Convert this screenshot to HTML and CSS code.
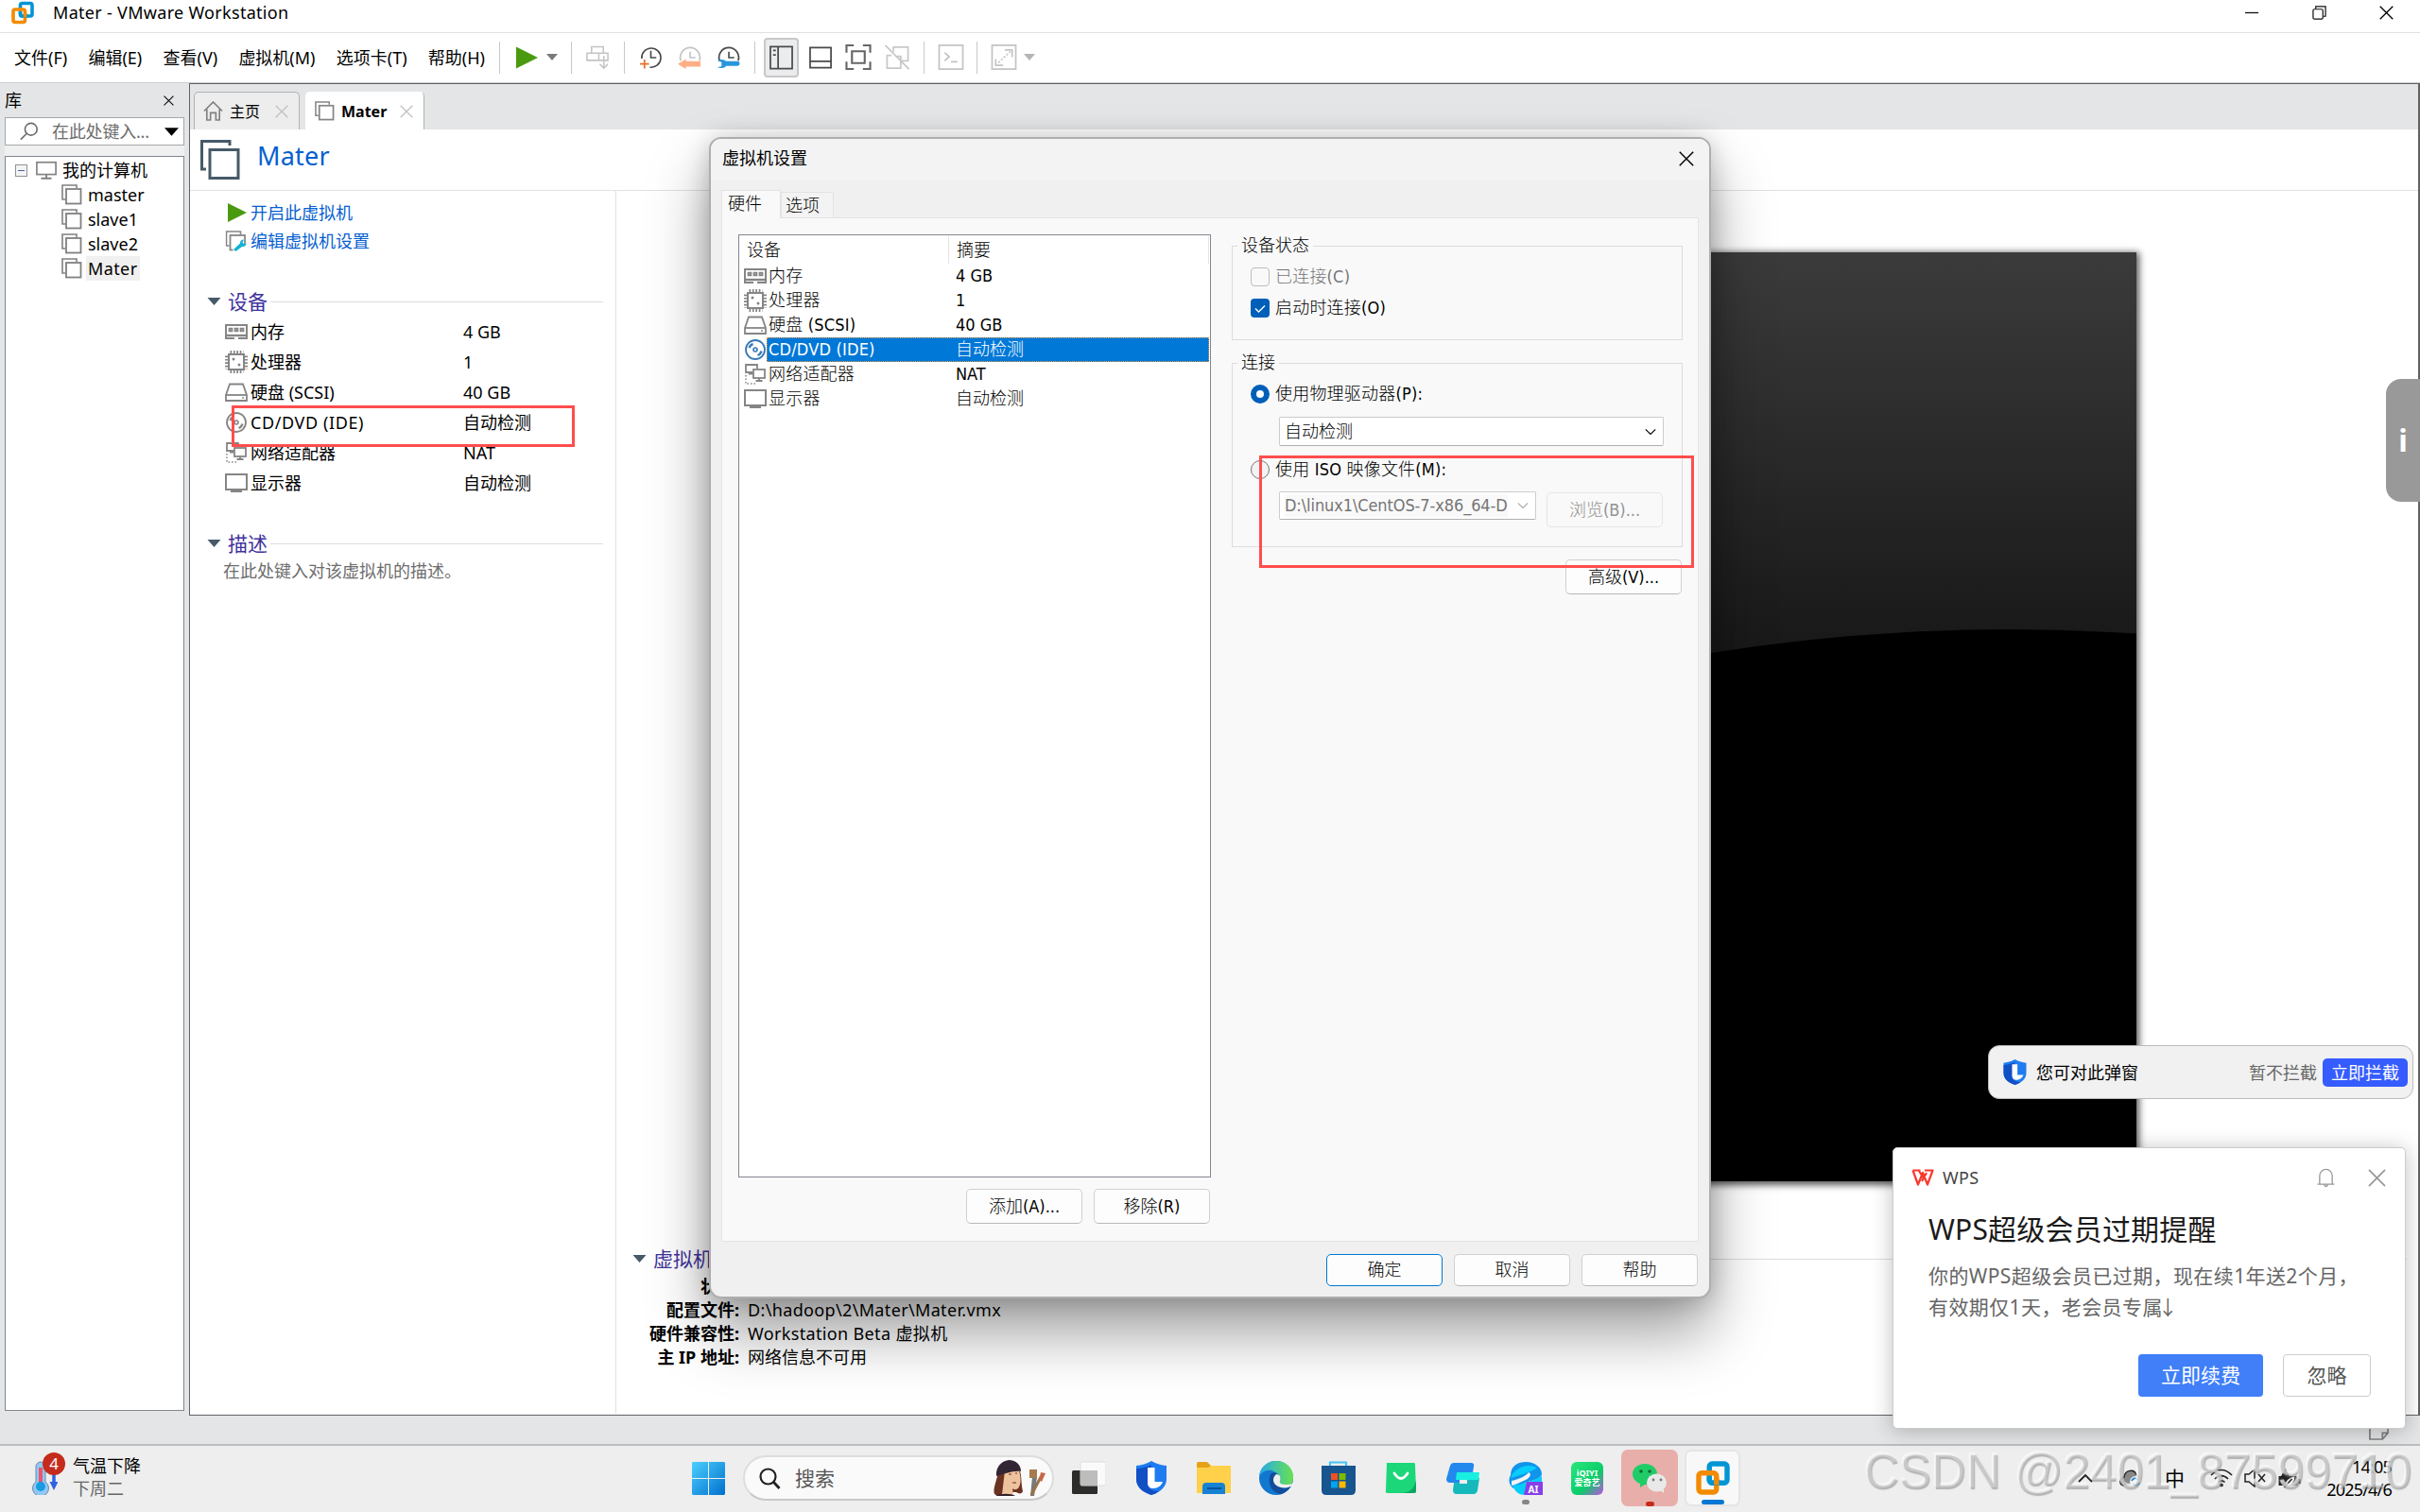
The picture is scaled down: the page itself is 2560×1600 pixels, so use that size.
FILE: index.html
```html
<!DOCTYPE html>
<html lang="zh-CN">

<head>
    <meta charset="UTF-8">
    <title>Mater - VMware Workstation</title>
    <link rel="stylesheet" href="styles.css">
</head>

<body>
    <!-- Shared icons -->
    <svg class="sprite" xmlns="http://www.w3.org/2000/svg">
        <symbol id="vmware" viewBox="0 0 24 24">
            <rect x="9.5" y="2" width="12.5" height="13.5" rx="2" fill="none" stroke="#0095d3" stroke-width="3.6" />
            <rect x="2" y="8.5" width="12.5" height="13.5" rx="2" fill="none" stroke="#f38b00" stroke-width="3.6" />
            <path d="M9.500 11v2.500a2 2 0 0 0 2 2h6" fill="none" stroke="#0095d3" stroke-width="3.6" />
            <path d="M14.500 12v5" fill="none" stroke="#f38b00" stroke-width="3.6" />
        </symbol>
        <symbol id="vm" viewBox="0 0 22 22">
            <path d="M4 16H1V1h15v3" fill="none" stroke="currentColor" stroke-width="1.6" />
            <rect x="5" y="5" width="15.500" height="15.500" fill="none" stroke="currentColor" stroke-width="1.8" />
        </symbol>
        <symbol id="cross" viewBox="0 0 14 14">
            <path d="M.7.7l12.600 12.600M13.300.7L.7 13.300" fill="none" stroke="currentColor" stroke-width="1.3" />
        </symbol>
        <symbol id="play" viewBox="0 0 20 20">
            <path d="M0 0l20 10L0 20z" fill="#4a9a10" />
        </symbol>
        <symbol id="caret" viewBox="0 0 14 8">
            <path d="M0 0h14L7 8z" fill="currentColor" />
        </symbol>
        <symbol id="lens" viewBox="0 0 22 22">
            <circle cx="13" cy="8.500" r="7" fill="none" stroke="currentColor" stroke-width="1.800" />
            <path d="M8 13.500l-7 7" stroke="currentColor" stroke-width="1.800" />
        </symbol>
        <symbol id="monitor" viewBox="0 0 24 24">
            <rect x="1" y="3" width="22" height="16" fill="#fff" stroke="currentColor" stroke-width="2" />
            <path d="M6 21h12" stroke="currentColor" stroke-width="2" />
        </symbol>
        <symbol id="computer" viewBox="0 0 24 24">
            <rect x="1" y="3" width="22" height="14" fill="#fff" stroke="currentColor" stroke-width="1.800" />
            <path d="M12 17v4M6 21.500h12" stroke="currentColor" stroke-width="2" />
        </symbol>
        <symbol id="memory" viewBox="0 0 24 24">
            <rect x="1" y="5" width="22" height="14" fill="#fff" stroke="currentColor" stroke-width="2" />
            <path d="M0 16h24" stroke="currentColor" stroke-width="2.400" />
            <path d="M4.500 8.500h3v3h-3zM10.500 8.500h3v3h-3zM16.500 8.500h3v3h-3z" fill="#aaa" stroke="currentColor" stroke-width="1.700" />
            <path d="M10 18h4v2.100h-4z" fill="#fff" />
        </symbol>
        <symbol id="cpu" viewBox="0 0 24 24">
            <rect x="4" y="4" width="16" height="16" fill="#fff" stroke="currentColor" stroke-width="2" />
            <path d="M5.500 1.500h14M5.500 22.500h14" stroke="currentColor" stroke-width="3" stroke-dasharray="1.700 1.700" />
            <path d="M1.500 5.500v14M22.500 5.500v14" stroke="currentColor" stroke-width="3" stroke-dasharray="1.700 1.700" />
            <circle cx="9" cy="9" r="1.500" fill="currentColor" />
            <circle cx="15" cy="15" r="1.500" fill="currentColor" />
        </symbol>
        <symbol id="disk" viewBox="0 0 24 24">
            <path d="M5 3.500h14l4 11.500v6H1v-6z" fill="#fff" stroke="currentColor" stroke-width="1.800" />
            <path d="M1 15h22" stroke="currentColor" stroke-width="1.800" />
            <circle cx="19" cy="18" r="1" fill="currentColor" />
        </symbol>
        <symbol id="disc" viewBox="0 0 24 24">
            <circle cx="12" cy="12" r="10" fill="#fff" stroke="currentColor" stroke-width="1.800" />
            <circle cx="12" cy="12" r="2" fill="none" stroke="currentColor" stroke-width="1.600" />
            <path d="M5.500 10a6.500 6.500 0 0 1 4-4M18.500 13.500a6.500 6.500 0 0 1-4 4.500" fill="none" stroke="currentColor" stroke-width="2.400" />
        </symbol>
        <symbol id="network" viewBox="0 0 24 24">
            <path d="M9 10H2V2h12v4" fill="none" stroke="currentColor" stroke-width="1.800" />
            <rect x="10" y="7" width="12" height="9" fill="#fff" stroke="currentColor" stroke-width="1.800" />
            <path d="M16 16v3M12.500 19h7M5 11.500h4" stroke="currentColor" stroke-width="1.800" />
            <path d="M2 13v9h12" fill="none" stroke="currentColor" stroke-width="1.500" stroke-dasharray="1.500 2" />
        </symbol>
        <symbol id="clock" viewBox="0 0 24 24">
            <path d="M3 15a10 10 0 1 1 19 0" fill="none" stroke="currentColor" stroke-width="1.700" />
            <path d="M12.500 6v6H18" fill="none" stroke="currentColor" stroke-width="1.600" />
        </symbol>
        <symbol id="chevron" viewBox="0 0 12 8">
            <path d="M.8 1.300L6 6.500l5.200-5.200" fill="none" stroke="currentColor" stroke-width="1.100" />
        </symbol>
        <symbol id="shield" viewBox="0 0 32 36">
            <path d="M16 0C21 3 27 4.500 32 5v14c0 9-7 14-16 17C7 33 0 28 0 19V5c5-.5 11-2 16-5z" fill="#1f7cf0" />
            <path d="M16 4C11 6 6 8 0 8v11c0 9 7 14 16 17 3-1 6-2 8-4-8 0-12-3-12-9z" fill="#104fc4" />
            <path d="M12 7h7.500v15H28c-1.500 4-5 7-10 7-3.500 0-6-2-6-6z" fill="#fff" />
        </symbol>
    </svg>

    <header class="titlebar">
        <svg class="logo"><use href="#vmware" /></svg>
        <span>Mater - VMware Workstation</span>
        <div class="window-controls">
            <svg viewBox="0 0 16 16"><path d="M0 8h15" stroke="#111" stroke-width="1.400" /></svg>
            <svg viewBox="0 0 16 16"><path d="M4 3.500V1h11v11h-2.500" fill="none" stroke="#111" stroke-width="1.300" /><rect x="1" y="4" width="11" height="11" rx="1.500" fill="none" stroke="#111" stroke-width="1.300" /></svg>
            <svg><use href="#cross" /></svg>
        </div>
    </header>

    <div class="menubar">
        <nav class="menu">
            <span>文件(F)</span><span>编辑(E)</span><span>查看(V)</span><span>虚拟机(M)</span><span>选项卡(T)</span><span>帮助(H)</span>
        </nav>
        <div class="tools tools-power">
            <svg class="tool-play"><use href="#play" /></svg>
            <svg class="tool-caret"><use href="#caret" /></svg>
        </div>
        <div class="tools tools-keys">
            <svg viewBox="0 0 26 26" fill="none" stroke="#c4c4c4" stroke-width="1.600"><path d="M6 8V1h13v7M1 8h23v8H1zM14 8v8M19.500 11v13M15 20l4.500 4.500L24 20" /></svg>
        </div>
        <div class="tools tools-snapshot">
            <svg viewBox="0 0 26 26" class="dark"><path d="M3 14a10.500 10.500 0 1 1 9 9.500M13 5.500V13h6" fill="none" stroke="#4a4a4a" stroke-width="1.700" /><path d="M6 15v10M1 20h10" stroke="#e8702a" stroke-width="1.800" /></svg>
            <svg viewBox="0 0 26 26" class="faded"><use href="#clock" /><path d="M0 20l9-5.500V17h16v6H9v2.500z" fill="#ffae86" /></svg>
            <svg viewBox="0 0 26 26" class="dark"><use href="#clock" /><path d="M1 16.500c4-2.500 8-1.500 9.500.5H23q2.500 0 2.500 2.500T23 22H10.500c-1.500 2.500-6 3.500-9.500 1.500l4.500-1v-4.500z" fill="#2896dc" /></svg>
        </div>
        <div class="tools tools-view">
            <span class="tool-on"><svg viewBox="0 0 26 26" fill="none" stroke="#4a4a4a" stroke-width="1.800"><path d="M1 1h24v24H1zM9.500 1v24M4 5h3M4 10h3" /></svg></span>
            <svg viewBox="0 0 26 26" fill="none" stroke="#4a4a4a" stroke-width="1.800"><path d="M1 2h23v22H1zM1 17h23" /></svg>
            <svg viewBox="0 0 28 28" class="wide" fill="none" stroke="#666" stroke-width="2.200"><path d="M1 9V1h8M19 1h8v8M27 19v8h-8M9 27H1v-8M7 7.500h14v13H7z" /></svg>
            <svg viewBox="0 0 28 28" class="wide" fill="none" stroke="#c8c8c8" stroke-width="1.800"><path d="M10 8V3h16v15h-8M12 13h6v13H3V12h5M1 1l26 26" /></svg>
        </div>
        <div class="tools tools-console">
            <svg viewBox="0 0 28 28" class="wide" fill="none" stroke="#c4c4c4" stroke-width="1.800"><path d="M1 1h26v26H1zM7 9l5 4.500L7 18M14 19h7" /></svg>
        </div>
        <div class="tools tools-stretch">
            <svg viewBox="0 0 28 28" class="wide" fill="none" stroke="#c4c4c4" stroke-width="1.800"><path d="M1 1h26v26H1zM15 6h8v8M13 23H5v-7" /><path d="M8 20L21 8" stroke-dasharray="2 2" /></svg>
            <svg class="tool-caret"><use href="#caret" /></svg>
        </div>
    </div>

    <div class="workspace">
        <aside class="library">
            <div class="library-head"><span>库</span><svg><use href="#cross" /></svg></div>
            <div class="library-search">
                <svg class="lens"><use href="#lens" /></svg>
                <span>在此处键入...</span>
                <svg class="arrow"><use href="#caret" /></svg>
            </div>
            <div class="tree">
                <div class="tree-root"><i class="expander"></i><svg><use href="#computer" /></svg><span>我的计算机</span></div>
                <div class="tree-item"><svg><use href="#vm" /></svg><span>master</span></div>
                <div class="tree-item"><svg><use href="#vm" /></svg><span>slave1</span></div>
                <div class="tree-item"><svg><use href="#vm" /></svg><span>slave2</span></div>
                <div class="tree-item selected"><svg><use href="#vm" /></svg><span>Mater</span></div>
            </div>
        </aside>

        <main class="content">
            <div class="tabs">
                <div class="tab tab-home">
                    <svg viewBox="0 0 22 22" fill="none" stroke="#808080" stroke-width="1.700"><path d="M1 11L11 1l10 10M4 9v12h4v-8h6v8h4V9" /></svg>
                    <span>主页</span>
                    <svg class="tab-close"><use href="#cross" /></svg>
                </div>
                <div class="tab tab-active">
                    <svg><use href="#vm" /></svg>
                    <span>Mater</span>
                    <svg class="tab-close"><use href="#cross" /></svg>
                </div>
            </div>
            <div class="vm-title">
                <svg viewBox="0 0 42 42" fill="none" stroke="#465a69" stroke-width="3"><path d="M6 31H1.500V1.500H31V6" /><rect x="10" y="10.500" width="30" height="30" /></svg>
                <h1>Mater</h1>
            </div>
            <div class="vm-body">
                <section class="vm-side">
                    <div class="action"><svg class="go"><use href="#play" /></svg><a>开启此虚拟机</a></div>
                    <div class="action">
                        <svg viewBox="0 0 22 22" class="edit"><use href="#vm" /><path d="M8 19l7-6c0-4 3-5 5-4l-2 3 2 2 3-1v9H8z" fill="#fff" /><path d="M8.500 20l7-6.500c0-3 2-4.500 4-4l-1.500 3 1.500 1.500 2.500-1c0 3-2 4.500-4.500 4L11 22z" fill="#12b3d6" /></svg>
                        <a>编辑虚拟机设置</a>
                    </div>
                    <div class="section-head devices-head"><svg><use href="#caret" /></svg><h2>设备</h2><hr></div>
                    <div class="device"><svg><use href="#memory" /></svg><span>内存</span><span>4 GB</span></div>
                    <div class="device"><svg><use href="#cpu" /></svg><span>处理器</span><span>1</span></div>
                    <div class="device"><svg><use href="#disk" /></svg><span>硬盘 (SCSI)</span><span>40 GB</span></div>
                    <div class="device"><svg><use href="#disc" /></svg><span class="latin">CD/DVD (IDE)</span><span>自动检测</span></div>
                    <div class="device"><svg><use href="#network" /></svg><span>网络适配器</span><span>NAT</span></div>
                    <div class="device"><svg><use href="#monitor" /></svg><span>显示器</span><span>自动检测</span></div>
                    <div class="section-head note-head"><svg><use href="#caret" /></svg><h2>描述</h2><hr></div>
                    <p class="note">在此处键入对该虚拟机的描述。</p>
                </section>
                <section class="vm-main">
                    <div class="preview">
                        <svg viewBox="0 0 1310 983"><ellipse cx="1175" cy="999" rx="1100" ry="600" /></svg>
                    </div>
                    <div class="section-head"><svg><use href="#caret" /></svg><h2>虚拟机详细信息</h2><hr></div>
                    <dl class="details">
                        <dt>状态:</dt><dd>已关机</dd>
                        <dt>配置文件:</dt><dd class="latin">D:\hadoop\2\Mater\Mater.vmx</dd>
                        <dt>硬件兼容性:</dt><dd class="latin">Workstation Beta 虚拟机</dd>
                        <dt>主 IP 地址:</dt><dd>网络信息不可用</dd>
                    </dl>
                </section>
            </div>
        </main>
    </div>
    <div class="statusbar">
        <svg viewBox="0 0 22 24" fill="none" stroke="#808080" stroke-width="1.800"><path d="M1 1h20v15l-6 7H1zM15 23v-7h6" /></svg>
    </div>

    <footer class="taskbar">
        <div class="weather">
            <svg viewBox="0 0 28 36"><path d="M5 6a5 5 0 0 1 10 0v16a8.500 8.500 0 1 1-10 0z" fill="#8fc8f6" stroke="#6d8ba5" /><path d="M10 7v19" stroke="#f0536a" stroke-width="4" /><circle cx="10" cy="27" r="5" fill="#189be0" /><path d="M24 12v12" stroke="#2f62e0" stroke-width="3.500" /><path d="M19.500 22h9L24 31z" fill="#2f62e0" /></svg>
            <b class="badge">4</b>
            <div class="weather-text"><span>气温下降</span><span class="muted">下周二</span></div>
        </div>
        <div class="apps">
            <svg class="app-start" viewBox="0 0 35 35"><defs><linearGradient id="win" x2="1" y2="1"><stop stop-color="#4ccfff" /><stop offset="1" stop-color="#0070cc" /></linearGradient></defs><path d="M1 0h16v17H0V1zM18 0h16l1 1v16H18zM0 18h17v17H1l-1-1zM18 18h17v16l-1 1H18z" fill="url(#win)" /></svg>
            <div class="search">
                <svg class="search-lens" viewBox="0 0 23 23"><circle cx="9.500" cy="9.500" r="8" fill="none" stroke="#222" stroke-width="2.200" /><path d="M15 15l6.500 7" stroke="#222" stroke-width="2.800" /></svg>
                <span>搜索</span>
                <svg class="search-art" viewBox="0 0 56 40"><path d="M5 14C3 24-1 32 1 37c5 3 8 1 9-2h14c3 2 6 2 7-1-2-8-1-15-3-21z" fill="#693221" /><path d="M12 12l14-2c3 7 4 16 0 21-3 2-5 1-6 0l1 7H9l1-9z" fill="#edc39d" /><path d="M3 18C2 9 8 2 16 1c8 0 13 5 13 12-9-1-18 3-26 5z" fill="#322533" /><path d="M2 39c5-3 17-3 21 0z" fill="#33202a" /><path d="M16 16h3M23 15h2M20 25h4" stroke="#9c5943" stroke-width="1.500" /><path d="M39 39l2-20h5l-3 20z" fill="#747a7d" /><path d="M38 11h8v9h-8z" fill="#a77b4f" /><path d="M40 38l10-19" stroke="#987448" stroke-width="3" /><path d="M48 22l2-8 5 1-4 9z" fill="#c8674a" /></svg>
            </div>
            <svg class="app app-taskview" viewBox="0 0 36 36"><rect y="10" width="27" height="25" rx="1.500" fill="#2c2c2a" /><rect x="9" y="1" width="27" height="25" rx="1.500" fill="#fafafa" stroke="#ddd" /><path d="M9 10h18v16H9z" fill="#bdbdbd" /></svg>
            <svg class="app app-guard"><use href="#shield" /></svg>
            <svg class="app" viewBox="0 0 36 36"><path d="M0 3q0-2 2-2h9l4 4h19q2 0 2 2v27H0z" fill="#e5a216" /><path d="M0 7h12l3-2h21v29H0z" fill="#ffd04a" /><path d="M6 35V27q0-4 4-4h16q4 0 4 4v8z" fill="#1682d4" /><path d="M11 29h15" stroke="#07559d" stroke-width="2" /></svg>
            <svg class="app" viewBox="0 0 36 36"><defs><linearGradient id="edge" x2="1"><stop stop-color="#25a9ee" /><stop offset="1" stop-color="#69e24d" /></linearGradient></defs><circle cx="18" cy="18" r="18" fill="#1277cf" /><path d="M0 17C1 6 9 0 18 0c10 0 18 7 18 17 0 7-4 11-9 11-4 0-6-1-6-3 3-6-1-13-8-15C7 9 2 12 0 17z" fill="url(#edge)" /><path d="M12 14c-4 10 2 20 11 21 6-2 9-6 11-9-7 5-15 2-16-4 0-3 2-5 3-7-3-4-7-3-9-1z" fill="#124d9b" /><path d="M18 14c-5 4-4 12 5 14 5 1 10 0 13-3v-2c-1 1-3 2-6 2-6 0-9-1-8-4 1-4 0-7-4-7z" fill="#eee" /></svg>
            <svg class="app" viewBox="0 0 36 36"><path d="M9 6V1.500h17V6" fill="none" stroke="#46c4f5" stroke-width="2.200" /><path d="M0 5h36v26q0 5-5 5H5q-5 0-5-5z" fill="#17558f" /><path d="M10 13h7v7h-7z" fill="#f25022" /><path d="M18.500 13h7v7h-7z" fill="#7fba00" /><path d="M10 21.500h7v7h-7z" fill="#00a4ef" /><path d="M18.500 21.500h7v7h-7z" fill="#ffb900" /></svg>
            <svg class="app" viewBox="0 0 36 36"><path d="M3 2h29q1 0 1 2l1 28q0 2-3 2H4q-3 0-2-3L3 3z" fill="#1bd77a" /><path d="M34 20q-2 13-15 14h12q3 0 3-2z" fill="#0ca764" /><path d="M11 13q7 11 14 0" fill="none" stroke="#fff" stroke-width="2.800" stroke-linecap="round" /></svg>
            <svg class="app" viewBox="0 0 36 36"><path d="M8 2h18q4 0 3 4l-1 6h-8v11H4q-4 0-4-4L4 5q1-3 4-3z" fill="#2388ee" /><path d="M21 18h14l-2 13q-1 4-4 4H11q-4 0-4-4l1-8h13z" fill="#16b9bb" /><path d="M11 12h24l-1 8H10z" fill="#18efe0" /><path d="M14 20h8v4h-8z" fill="#eee" /></svg>
            <svg class="app app-running" viewBox="0 0 36 46"><path d="M2 15C2 5 10 1 18 1c10 0 17 6 17 13-1 4-7 6-15 8L5 29C-1 24 0 19 2 15z" fill="#1094ec" /><path d="M9 9q10-7 21-2-4 4-28 11 2-6 7-9zM4 26c10-1 22-5 31-10v8c0 7-8 12-17 12-7 0-11-3-14-10z" fill="#08cdfb" /><path d="M3 21c9-2 15-5 18-9 4 2 1 6-3 8L7 25l-4 1z" fill="#f4f4f4" /><path d="M19 22h17v14H16z" fill="#873fe9" /><text x="26" y="34" class="ai-text">AI</text><rect x="14" y="41" width="8" height="5" rx="2.500" fill="#858585" /></svg>
            <div class="iqiyi"><span>iQIYI</span><span>爱奇艺</span></div>
            <div class="task-slot task-wechat">
                <svg viewBox="0 0 36 36"><path d="M13 3c8 0 13 5 13 11S21 25 13 25l-5 3v-4C3 22 0 18 0 14 0 8 5 3 13 3z" fill="#20cc67" /><ellipse cx="25.500" cy="23" rx="10.500" ry="9.500" fill="#e9e9e9" /><path d="M29 31l4 3v-7z" fill="#e9e9e9" /><g fill="#166835"><circle cx="9" cy="11" r="1.800" /><circle cx="18" cy="11" r="1.800" /></g><g fill="#777"><circle cx="22" cy="20" r="1.400" /><circle cx="30" cy="20" r="1.400" /></g></svg>
                <i></i>
            </div>
            <div class="task-slot task-vmware"><svg><use href="#vmware" /></svg><i></i></div>
        </div>
        <div class="tray">
            <svg class="tray-up" viewBox="0 0 16 10"><path d="M1 9l7-7 7 7" fill="none" stroke="#222" stroke-width="1.800" /></svg>
            <svg class="tray-cloud" viewBox="0 0 24 20"><path d="M5 18C-1 17 0 10 5 9 6 1 16 0 18 7c4 0 5 5 4 8z" fill="#888" /><path d="M5 18C-1 17 0 10 5 9 6 1 16 0 18 7" fill="none" stroke="#222" stroke-width="1.500" /><circle cx="17" cy="14" r="6" fill="#eee" /><path d="M13 13a4 4 0 0 1 7-1M21 15a4 4 0 0 1-7 1" fill="none" stroke="#1683d6" stroke-width="1.600" /></svg>
            <span class="ime">中</span>
            <svg class="tray-wifi" viewBox="0 0 24 20" fill="none" stroke="#222" stroke-width="1.700"><path d="M1 7q11-11 22 0M5 11q7-7 14 0M8.500 14.500q3.500-3.500 7 0" /><circle cx="12" cy="17.500" r="1" /></svg>
            <svg class="tray-mute" viewBox="0 0 24 20" fill="none" stroke="#222" stroke-width="1.500"><path d="M1 6h4l6-5v18l-6-5H1zM15 6l7 8M22 6l-7 8" /></svg>
            <svg class="tray-battery" viewBox="0 0 24 22"><path d="M1 9h20v10H1z" fill="#222" /><path d="M21 12h3v5h-3z" fill="#222" /><path d="M3 10L8 1l5 9v6H3z" fill="#222" /><path d="M7 20Q9 11 18 9q0 10-11 11z" fill="#eee" /><path d="M7 21l8-9" stroke="#222" stroke-width="1.500" /></svg>
            <div class="clock"><span>14:05</span><span>2025/4/6</span></div>
        </div>
    </footer>

    <!-- Virtual machine settings -->
    <div class="dialog">
        <div class="dialog-title"><span>虚拟机设置</span><svg><use href="#cross" /></svg></div>
        <div class="dialog-body">
            <div class="dialog-tabs"><span class="current">硬件</span><span>选项</span></div>
            <div class="dialog-page">
                <div class="hardware">
                    <div class="hw-list">
                        <div class="hw-head"><span>设备</span><span>摘要</span></div>
                        <div class="hw-row"><svg><use href="#memory" /></svg><div><span>内存</span><span>4 GB</span></div></div>
                        <div class="hw-row"><svg><use href="#cpu" /></svg><div><span>处理器</span><span>1</span></div></div>
                        <div class="hw-row"><svg><use href="#disk" /></svg><div><span>硬盘 (SCSI)</span><span>40 GB</span></div></div>
                        <div class="hw-row selected"><svg><use href="#disc" /></svg><div><span>CD/DVD (IDE)</span><span>自动检测</span></div></div>
                        <div class="hw-row"><svg><use href="#network" /></svg><div><span>网络适配器</span><span>NAT</span></div></div>
                        <div class="hw-row"><svg><use href="#monitor" /></svg><div><span>显示器</span><span>自动检测</span></div></div>
                    </div>
                    <div class="hw-buttons"><button>添加(A)...</button><button>移除(R)</button></div>
                </div>
                <div class="options">
                    <fieldset class="state">
                        <legend>设备状态</legend>
                        <label class="disabled"><i class="box"></i>已连接(C)</label>
                        <label><i class="box checked"><svg viewBox="0 0 20 20"><path d="M5 10.500l3.500 3.500L15 7.500" fill="none" stroke="#fff" stroke-width="1.400" /></svg></i>启动时连接(O)</label>
                    </fieldset>
                    <fieldset class="connection">
                        <legend>连接</legend>
                        <label><i class="radio picked"></i>使用物理驱动器(P):</label>
                        <div class="select"><span>自动检测</span><svg><use href="#chevron" /></svg></div>
                        <label><i class="radio"></i>使用 ISO 映像文件(M):</label>
                        <div class="iso">
                            <div class="select disabled"><span>D:\linux1\CentOS-7-x86_64-D</span><svg><use href="#chevron" /></svg></div>
                            <button disabled>浏览(B)...</button>
                        </div>
                    </fieldset>
                    <button class="advanced">高级(V)...</button>
                </div>
            </div>
            <div class="dialog-buttons"><button class="default">确定</button><button>取消</button><button>帮助</button></div>
        </div>
    </div>

    <div class="mark mark-device"></div>
    <div class="mark mark-iso"></div>

    <div class="side-handle">i</div>

    <div class="blocker">
        <svg><use href="#shield" /></svg>
        <span>您可对此弹窗</span>
        <span class="allow">暂不拦截</span>
        <span class="block">立即拦截</span>
    </div>

    <div class="wps">
        <div class="wps-head">
            <svg class="wps-logo" viewBox="0 0 24 18"><path d="M1.500 1.500h8M14 1.500h8.500L17 16.500 12 4 7 16.500 1.500 1.500M8 2l5 8M11 13l5-9" fill="none" stroke="#f9382c" stroke-width="2.200" stroke-linejoin="round" /></svg>
            <span>WPS</span>
            <svg class="wps-bell" viewBox="0 0 20 22" fill="none" stroke="#999" stroke-width="1.400"><path d="M3 18V9a7 7 0 0 1 14 0v9M.5 18.500h19M8 19q2 4 4 0" /></svg>
            <svg class="wps-close"><use href="#cross" /></svg>
        </div>
        <h3>WPS超级会员过期提醒</h3>
        <p>你的WPS超级会员已过期，现在续1年送2个月，<br>有效期仅1天，老会员专属<span class="down">↓</span></p>
        <div class="wps-buttons"><span class="renew">立即续费</span><span class="ignore">忽略</span></div>
    </div>

    <div class="watermark">CSDN @2401_87599710</div>
</body>

</html>
```
FILE: styles.css
```css
* {
    box-sizing: border-box;
}

body {
    display: flex;
    flex-direction: column;
    width: 2560px;
    height: 1600px;
    margin: 0;
    overflow: hidden;
    font: 18px/24px "Noto Sans", "Noto Sans CJK SC", sans-serif;
    font-weight: 400;
    color: #000;
    background: #e4e5e7;
    white-space: nowrap;
}

svg {
    display: block;
    flex: none;
}

.sprite {
    position: absolute;
    width: 0;
    height: 0;
}

h1, h2, h3, p, dl, dd {
    margin: 0;
    font-weight: 400;
}

.latin {
    letter-spacing: 0.35px;
}

/* Title and menu */
.titlebar {
    display: flex;
    align-items: center;
    height: 34px;
    padding: 0 28px 8px 12px;
    background: #fff;
    letter-spacing: 0.3px;
}

.logo {
    width: 24px;
    height: 25px;
    margin-right: 20px;
}

.window-controls {
    display: flex;
    gap: 56px;
    margin-left: auto;
}

.window-controls svg {
    width: 15px;
    height: 15px;
}

.menubar {
    display: flex;
    align-items: center;
    height: 54px;
    padding-bottom: 1px;
    border-top: 1px solid #e1e1e1;
    border-bottom: 1px solid #ccc;
    background: #fff;
}

.menu {
    display: flex;
    justify-content: space-between;
    width: 498px;
    margin: 0 15px 0 15px;
}

.tools {
    display: flex;
    align-items: center;
    height: 34px;
    border-left: 1px solid #c8c8c8;
}

.tools svg {
    width: 25px;
    height: 26px;
}

.tools .wide {
    width: 28px;
    height: 27px;
}

.tools .tool-play {
    width: 23px;
    height: 24px;
}

.tools .tool-caret {
    width: 12px;
    height: 7px;
    margin-left: 9px;
    color: #7a7a7a;
}

.tools-power {
    width: 76px;
    padding-left: 17px;
}

.tools-keys {
    width: 56px;
    padding-left: 15px;
}

.tools-snapshot {
    gap: 16px;
    width: 138px;
    padding-left: 15px;
}

.dark {
    color: #4a4a4a;
}

.faded {
    color: #c4c4c4;
}

.tools-view {
    gap: 13px;
    width: 179px;
    padding-left: 9px;
}

.tool-on {
    margin-right: -2px;
    padding: 6px 4px;
    border: 2px solid #c8c8c8;
    border-radius: 4px;
    background: #ebecee;
}

.tools-console {
    width: 56px;
    padding-left: 14px;
}

.tools-stretch {
    padding-left: 14px;
}

.tools-stretch .tool-caret {
    margin-left: 7px;
    color: #b5b5b5;
}

/* Library */
.workspace {
    display: flex;
    height: 1410px;
}

.library {
    width: 200px;
    padding: 0 5px;
}

.library-head {
    display: flex;
    align-items: center;
    justify-content: space-between;
    height: 36px;
    padding-right: 11px;
}

.library-head svg {
    width: 11px;
    height: 11px;
}

.library-search {
    display: flex;
    align-items: center;
    height: 30px;
    padding: 0 5px 0 15px;
    border: 1px solid #a5a8ad;
    background: #fff;
    color: #6d6d6d;
}

.library-search span {
    margin-left: 14px;
    letter-spacing: -0.2px;
}

.lens {
    width: 20px;
    height: 20px;
}

.arrow {
    width: 15px;
    height: 9px;
    margin-left: auto;
    color: #000;
}

.tree {
    height: 1328px;
    margin-top: 11px;
    padding-top: 1px;
    border: 1px solid #828790;
    background: #fff;
    box-shadow: 0 -11px #f0f0f0;
}

.tree svg {
    width: 22px;
    height: 22px;
    color: #808080;
}

.tree-root, .tree-item {
    display: flex;
    align-items: center;
    height: 26px;
}

.tree-root {
    gap: 6px;
    padding-left: 10px;
}

.expander {
    width: 13px;
    height: 13px;
    margin-right: 3px;
    border: 1px solid #919191;
    background: linear-gradient(#4b63a7, #4b63a7) center / 7px 1px no-repeat #f4f4f4;
}

.tree-item {
    gap: 4px;
    padding-left: 59px;
}

.tree-item span {
    padding: 1px 2px;
}

.tree-item.selected span {
    background: #f0f0f0;
    letter-spacing: 0.4px;
}

/* Open tabs */
.content {
    flex: 1;
    border: 1px solid #606266;
    border-right-width: 2px;
    background: #fff;
}

.tabs {
    display: flex;
    align-items: flex-end;
    gap: 6px;
    height: 48px;
    padding-left: 4px;
    background: #e4e5e7;
}

.tab {
    display: flex;
    align-items: center;
    height: 40px;
    padding: 0 11px 0 9px;
    border: 1px solid #b2b2b2;
    border-bottom: 0;
    border-radius: 5px 5px 0 0;
    background: #ededee;
    font-size: 16px;
}

.tab svg {
    width: 21px;
    height: 21px;
    color: #858585;
}

.tab span {
    margin-left: 7px;
}

.tab .tab-close {
    width: 14px;
    height: 14px;
    margin-left: auto;
    color: #c0c0c0;
}

.tab-home {
    width: 112px;
}

.tab-active {
    width: 126px;
    border-color: #fff #b2b2b2 #fff #fff;
    background: #fff;
    font-weight: 700;
}

.vm-title {
    display: flex;
    gap: 18px;
    height: 65px;
    padding: 11px 11px;
    border-bottom: 1px solid #e1e1e1;
}

.vm-title svg {
    width: 42px;
    height: 42px;
}

h1 {
    font-size: 27px;
    line-height: 34px;
    letter-spacing: 0.2px;
    color: #0560d0;
}

.vm-body {
    display: flex;
    height: 1294px;
}

.vm-side {
    width: 451px;
    padding: 8px 13px 0 37px;
    border-right: 1px solid #e1e1e1;
}

.action {
    display: flex;
    align-items: center;
    gap: 4px;
    height: 30px;
    color: #0560d0;
}

.action svg {
    width: 23px;
    height: 22px;
    color: #858585;
}

.action .go {
    width: 20px;
    height: 20px;
    margin-left: 3px;
}

.section-head {
    display: flex;
    align-items: center;
    height: 32px;
    margin-left: -19px;
}

.section-head svg {
    width: 15px;
    height: 8px;
    margin-right: 7px;
    color: #465a69;
}

h2 {
    font-size: 21px;
    line-height: 30px;
    color: #40329c;
}

.section-head hr {
    flex: 1;
    height: 1px;
    margin: 0 0 0 3px;
    border: 0;
    background: #ddd;
}

.devices-head {
    margin-top: 33px;
}

.device {
    display: grid;
    grid-template-columns: 24px 225px 1fr;
    column-gap: 3px;
    align-items: center;
    height: 32px;
}

.device span:last-child {
    margin-left: -3px;
}

.device .latin {
    letter-spacing: 0.6px;
}

.device svg {
    width: 24px;
    height: 24px;
    color: #858585;
}

.note-head {
    margin-top: 32px;
}

.note {
    margin: 1px 0 0 -2px;
    color: #6d6d6d;
}

.vm-main {
    flex: 1;
    padding: 65px 12px 0 36px;
}

.preview {
    width: 1310px;
    height: 983px;
    margin: 0 0 66px 262px;
    background: linear-gradient(#3b3b3b, #181818 43%, #000);
    box-shadow: 1px 2px 7px 2px rgba(0, 0, 0, .65);
}

.details {
    display: grid;
    grid-template-columns: 94px auto;
    column-gap: 9px;
    margin-top: 1px;
    line-height: 25px;
}

.details dt {
    font-weight: 700;
    justify-self: end;
}

.statusbar {
    display: flex;
    align-items: flex-end;
    justify-content: flex-end;
    height: 30px;
    padding: 0 33px 4px;
}

.statusbar svg {
    width: 21px;
    height: 23px;
}

/* Taskbar */
.taskbar {
    display: flex;
    height: 72px;
    border-top: 2px solid #bdbdbd;
    background: #eee;
}

.weather {
    position: relative;
    display: flex;
    width: 732px;
    padding: 16px 0 0 33px;
}

.weather svg {
    width: 28px;
    height: 36px;
}

.badge {
    position: absolute;
    top: 7px;
    left: 45px;
    width: 24px;
    height: 24px;
    border-radius: 50%;
    background: #c42b1c;
    color: #fff;
    font-size: 17px;
    font-weight: 400;
    text-align: center;
}

.weather-text {
    display: flex;
    flex-direction: column;
    margin: -7px 0 0 16px;
}

.muted {
    color: #666;
}

.apps {
    display: flex;
    height: 68px;
    align-items: center;
    width: 1110px;
}

.app-start {
    width: 35px;
    height: 35px;
}

.search {
    display: flex;
    align-items: center;
    width: 329px;
    height: 48px;
    margin: 0 19px 0 19px;
    padding: 0 6px 0 15px;
    border: 2px solid #ddd;
    border-bottom-color: #c8c8c8;
    border-radius: 24px;
    background: #fafafa;
    font-size: 21px;
    color: #555;
}

.search-lens {
    width: 23px;
    height: 23px;
    margin-right: 15px;
}

.search-art {
    width: 56px;
    height: 40px;
    margin-left: auto;
}

.app {
    width: 36px;
    height: 36px;
    margin-right: 30px;
}

.app-taskview {
    margin-right: 31px;
}

.app-guard {
    width: 34px;
    margin-right: 31px;
}

.app-running {
    height: 46px;
    margin-top: 10px;
}

.ai-text {
    font: 700 10px "Noto Sans", sans-serif;
    fill: #fff;
    text-anchor: middle;
}

.iqiyi {
    display: flex;
    flex-direction: column;
    align-items: center;
    justify-content: center;
    width: 34px;
    height: 35px;
    margin-right: 19px;
    border-radius: 6px;
    background: linear-gradient(135deg, #2be57b, #0acd68 60%, #c04ee5);
    color: #fff;
    font-size: 9px;
    font-weight: 700;
    line-height: 10px;
}

.task-slot {
    display: flex;
    flex-direction: column;
    align-items: center;
    width: 60px;
    height: 60px;
    margin-right: 7px;
    padding-top: 12px;
    border-radius: 7px;
}

.task-slot svg {
    width: 36px;
    height: 36px;
}

.task-slot i {
    width: 9px;
    height: 5px;
    margin-top: auto;
    border-radius: 3px;
    background: #c42b1c;
}

.task-wechat {
    background: #e8aeaa;
}

.task-vmware {
    width: 59px;
    margin-right: 0;
    padding-top: 10px;
    border: 2px solid #e5e5e5;
    background: #f8f8f8;
}

.task-vmware i {
    width: 24px;
    background: #0078d4;
}

.tray {
    display: flex;
    align-items: center;
    flex: 1;
    height: 68px;
    padding: 0 30px 0 356px;
}

.tray-up {
    width: 16px;
    height: 10px;
    margin-right: 28px;
}

.tray-cloud {
    width: 24px;
    height: 20px;
    margin-right: 24px;
}

.ime {
    margin-right: 27px;
    font-size: 21px;
}

.tray-wifi {
    width: 24px;
    height: 20px;
    margin-right: 12px;
}

.tray-mute {
    width: 24px;
    height: 20px;
    margin-right: 11px;
}

.tray-battery {
    width: 25px;
    height: 22px;
}

.clock {
    display: flex;
    flex-direction: column;
    align-items: flex-end;
    margin-left: auto;
    letter-spacing: -0.8px;
}

/* Settings dialog */
.dialog {
    position: absolute;
    top: 145px;
    left: 750px;
    width: 1060px;
    height: 1229px;
    border: 2px solid #aeaeae;
    border-radius: 13px;
    background: #f0f0f0;
    box-shadow: 0 36px 64px rgba(0, 0, 0, .38), 0 2px 26px rgba(0, 0, 0, .2);
    font-family: "DejaVu Sans Condensed", "Noto Sans CJK SC", sans-serif;
    font-size: 18px;
}

.dialog-title {
    display: flex;
    align-items: center;
    justify-content: space-between;
    height: 43px;
    padding: 0 16px 2px 12px;
    border-radius: 11px 11px 0 0;
    background: #f3f3f3;
}

.dialog-title svg {
    width: 16px;
    height: 16px;
}

.dialog-body {
    padding: 11px 11px 0 11px;
    font-weight: 300;
}

.dialog-tabs {
    display: flex;
    align-items: flex-end;
    height: 29px;
}

.dialog-tabs span {
    width: 56px;
    height: 27px;
    padding: 2px 0 0 4px;
    border: 1px solid #e3e3e3;
    border-bottom: 0;
    background: #f3f3f3;
}

.dialog-tabs .current {
    width: 63px;
    height: 30px;
    margin-bottom: -1px;
    padding-left: 6px;
    background: #f9f9f9;
    z-index: 1;
}

.dialog-page {
    display: flex;
    gap: 22px;
    height: 1084px;
    padding: 17px;
    border: 1px solid #e3e3e3;
    background: #f9f9f9;
}

.hw-list {
    width: 500px;
    height: 998px;
    padding: 1px;
    border: 1px solid #828790;
    background: #fff;
}

.hw-head {
    display: flex;
    height: 29px;
    line-height: 30px;
}

.hw-head span {
    width: 276px;
    padding-left: 8px;
    border-right: 1px solid #e5e5e5;
}

.hw-head span:first-child {
    width: 222px;
    padding-left: 7px;
}

.hw-row {
    display: flex;
    align-items: center;
    height: 26px;
    padding: 0 0 0 4px;
}

.hw-row svg {
    width: 24px;
    height: 24px;
    color: #858585;
}

.hw-row div {
    display: flex;
    flex: 1;
    height: 26px;
    padding-left: 2px;
    line-height: 26px;
}

.hw-row span:first-child {
    width: 198px;
    letter-spacing: 0.2px;
}

.hw-row.selected div {
    background: #0078d7;
    outline: 1px dotted #e89a3c;
    outline-offset: -1px;
    color: #fff;
}

.hw-row.selected svg {
    color: #3779b8;
}

.hw-buttons, .dialog-buttons {
    display: flex;
    justify-content: flex-end;
    gap: 12px;
    margin: 12px 1px 0 0;
}

.dialog button {
    width: 123px;
    height: 37px;
    padding: 0;
    border: 1px solid #d0d0d0;
    border-bottom-color: #b8b8b8;
    border-radius: 5px;
    background: #fdfdfd;
    font: inherit;
    color: #000;
}

.dialog-buttons {
    margin-top: 13px;
}

.dialog-buttons button {
    height: 34px;
}

.dialog .default {
    border-color: #0078d4;
}

.options {
    width: 477px;
}

fieldset {
    min-width: 0;
    margin: 0;
    padding: 4px 19px 0;
    border: 1px solid #dcdcdc;
}

legend {
    margin-left: -14px;
    padding: 0 4px;
    line-height: 24px;
}

.state {
    height: 112px;
    margin-bottom: 12px;
}

.connection {
    height: 207px;
}

label {
    display: flex;
    align-items: center;
    gap: 6px;
    height: 33px;
    padding-top: 1px;
    letter-spacing: 0.2px;
    white-space: pre;
}

.disabled {
    color: #757575;
}

.box, .radio {
    width: 20px;
    height: 20px;
    border: 1px solid #bdbdbd;
    border-radius: 4px;
}

.box.checked {
    border: 0;
    background: #005fb8;
}

.radio {
    border-color: #757575;
    border-radius: 50%;
    background: #f3f3f3;
}

.radio.picked {
    border: 6px solid #005fb8;
    background: #fff;
}

.select {
    display: flex;
    align-items: center;
    justify-content: space-between;
    width: 407px;
    height: 31px;
    margin: 8px 0 8px 30px;
    padding: 0 7px 0 5px;
    border: 1px solid #ccc;
    border-bottom-color: #b0b0b0;
    border-radius: 2px;
    background: #fff;
}

.select svg {
    width: 12px;
    height: 8px;
}

.iso {
    display: flex;
    gap: 11px;
    margin: 7px 0 0 30px;
}

.iso .select {
    width: 272px;
    height: 30px;
    margin: 0;
}

.iso .select span {
    letter-spacing: -0.1px;
    background: #f9f9f9;
}

.iso .select svg {
    color: #aaa;
}

.dialog button:disabled {
    margin-top: 1px;
    border-color: #e5e5e5;
    background: #f9f9f9;
    color: #929292;
}

.dialog .advanced {
    display: block;
    margin: 13px 1px 0 auto;
}

/* Highlight frames */
.mark {
    position: absolute;
    border: 3px solid #ff4d4d;
}

.mark-device {
    top: 429px;
    left: 245px;
    width: 363px;
    height: 44px;
}

.mark-iso {
    top: 482px;
    left: 1332px;
    width: 460px;
    height: 119px;
}

/* Floating panels */
.side-handle {
    position: absolute;
    top: 401px;
    right: 0;
    width: 36px;
    height: 130px;
    border-radius: 16px 0 0 16px;
    background: #999;
    color: #fff;
    font: 700 32px/130px "Noto Sans", sans-serif;
    text-align: center;
}

.blocker {
    position: absolute;
    top: 1106px;
    left: 2103px;
    display: flex;
    align-items: center;
    width: 450px;
    height: 57px;
    padding: 0 5px 0 15px;
    border: 1px solid #bbb;
    border-radius: 12px;
    background: #f1f1f1;
}

.blocker svg {
    width: 25px;
    height: 27px;
    margin-right: 10px;
}

.allow {
    margin: 0 6px 0 auto;
    color: #666;
}

.block {
    width: 90px;
    border-radius: 5px;
    background: #365cff;
    color: #fff;
    line-height: 30px;
    text-align: center;
}

.wps {
    position: absolute;
    top: 1214px;
    left: 2002px;
    width: 543px;
    height: 298px;
    padding: 19px 36px 0 37px;
    border: 1px solid #ccc;
    border-radius: 5px;
    background: #fff;
    box-shadow: 0 2px 22px rgba(0, 0, 0, .25);
}

.wps-head {
    display: flex;
    align-items: center;
    margin: 0 -16px 0 -18px;
    color: #444;
    letter-spacing: 0.3px;
}

.wps-logo {
    width: 24px;
    height: 18px;
    margin-right: 9px;
}

.wps-bell {
    width: 19px;
    height: 22px;
    margin-left: auto;
    margin-right: 35px;
}

.wps-close {
    width: 19px;
    height: 19px;
    color: #999;
}

.wps h3 {
    margin-top: 21px;
    font-size: 30px;
    line-height: 44px;
    color: #1a1a1a;
    letter-spacing: 0.2px;
}

.wps p {
    margin-top: 11px;
    font-size: 21px;
    line-height: 33px;
    color: #666;
    letter-spacing: 0.4px;
}

.down {
    display: inline-block;
    width: 10px;
    margin-left: -5px;
}

.wps-buttons {
    display: flex;
    justify-content: flex-end;
    gap: 21px;
    margin-top: 33px;
    font-size: 21px;
    line-height: 45px;
    text-align: center;
}

.renew {
    width: 132px;
    border-radius: 4px;
    background: #417ff9;
    color: #fff;
}

.ignore {
    width: 93px;
    border: 1px solid #ccc;
    border-radius: 4px;
    color: #555;
    line-height: 43px;
}

.watermark {
    position: absolute;
    top: 1529px;
    left: 1972px;
    font: 51px/56px "Liberation Sans", sans-serif;
    color: rgba(228, 228, 228, .35);
    text-shadow: 1px 2px 1px rgba(120, 120, 120, .5), -1px -1px 1px rgba(255, 255, 255, .7);
}
```
